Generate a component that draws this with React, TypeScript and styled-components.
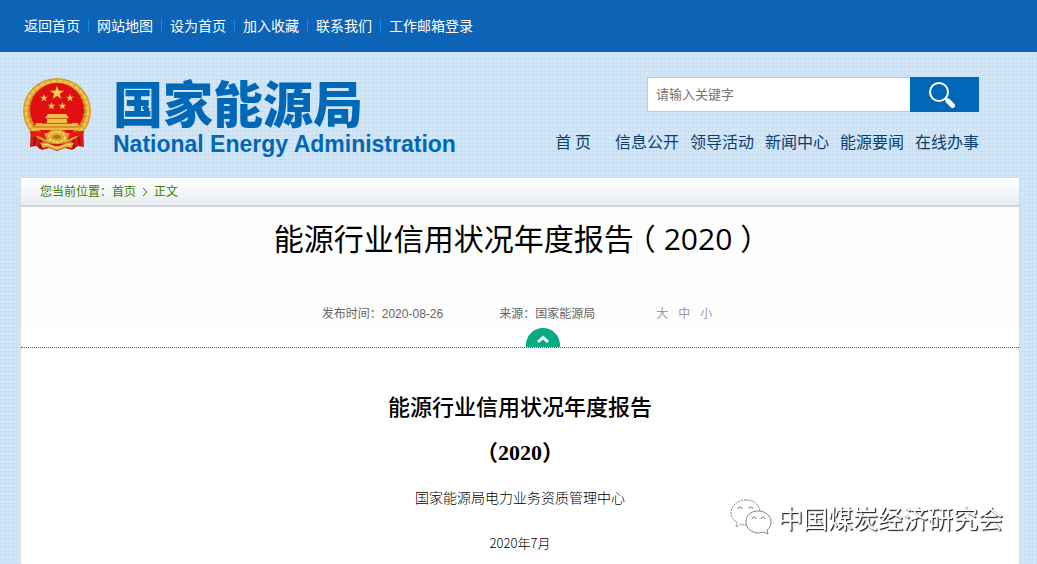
import React from "react";
import styled, { createGlobalStyle } from "styled-components";

const GlobalStyle = createGlobalStyle`
  * { box-sizing: border-box; }
  body {
    margin: 0;
    background-color: #d3e6f7;
    background-image:
      repeating-linear-gradient(0deg, rgba(176, 205, 232, 0.24) 0 1px, transparent 1px 4px),
      repeating-linear-gradient(90deg, rgba(176, 205, 232, 0.24) 0 1px, transparent 1px 4px);
    font-family: "Liberation Sans", "Noto Sans CJK SC", sans-serif;
    font-size: 12px;
  }
  a { color: inherit; text-decoration: none; }
  p, h1, h2 { margin: 0; }
`;

const Shell = styled.div`
  display: flex;
  flex-direction: column;
  min-height: 100vh;
`;

const TopBar = styled.nav`
  display: flex;
  align-items: center;
  height: 52px;
  padding: 0 16px;
  background: #0d63b6;
`;

const TopLink = styled.a`
  padding: 0 8px;
  border-left: 1px solid #0d8ce8;
  color: #fff;
  font-size: 14px;
  line-height: 14px;
  &:first-child { border-left: 0; }
`;

const Header = styled.header`
  display: flex;
  justify-content: space-between;
  align-items: flex-start;
  height: 125px;
  padding: 25px 58px 0 22px;
`;

const Brand = styled.a`
  display: flex;
  gap: 21px;
  color: #0068b7;
`;

const BrandText = styled.div`
  display: flex;
  flex-direction: column;
  gap: 6px;
  white-space: nowrap;
`;

const BrandName = styled.span`
  font-family: "Noto Sans CJK SC", sans-serif;
  font-size: 50px;
  line-height: 48px;
  font-weight: 900;
`;

const BrandLatin = styled.span`
  font-size: 23px;
  line-height: 26px;
  font-weight: 700;
`;

const Tools = styled.div`
  display: flex;
  flex-direction: column;
  align-items: flex-end;
  gap: 19px;
`;

const Search = styled.form`
  display: flex;
  width: 332px;
  height: 35px;
`;

const SearchInput = styled.input`
  flex: 1;
  min-width: 0;
  padding: 0 8px 2px;
  border: 1px solid #c8c8c8;
  border-right: 0;
  border-radius: 0;
  background: #fff;
  font-family: "Noto Sans CJK SC", sans-serif;
  font-size: 13px;
  &::placeholder { color: #757575; opacity: 1; }
`;

const SearchButton = styled.button`
  display: flex;
  justify-content: center;
  align-items: center;
  width: 69px;
  padding: 0 6px 0 0;
  border: 0;
  background: #0068b7;
`;

const MainNav = styled.nav`
  display: flex;
  gap: 11px;
  color: #0b3f70;
  font-family: "Noto Sans CJK SC", sans-serif;
  font-size: 16px;
  line-height: 20px;
  white-space: nowrap;
`;

const HomeLink = styled.a`
  margin-right: 13px;
`;

const Page = styled.main`
  flex: 1;
  margin: 0 17px 0 20px;
  border: 1px solid #d9d9d9;
  border-bottom: 0;
  background: #fff;
`;

const Crumbs = styled.nav`
  display: flex;
  align-items: center;
  gap: 6px;
  height: 29px;
  padding: 0 19px;
  border-bottom: 2px solid #d5d7d9;
  background: linear-gradient(#fff, #e9edf1);
  color: #3f7d00;
  line-height: 16px;
`;

const ArticleHead = styled.header`
  display: flex;
  flex-direction: column;
  align-items: center;
  padding-top: 10px;
  background: #fdfdfd;
`;

const Title = styled.h1`
  padding-left: 4px;
  color: #000;
  font-family: "Open Sans", "Noto Sans CJK SC", sans-serif;
  font-size: 30px;
  line-height: 44px;
  font-weight: 400;
`;

const TitleHan = styled.span`
  margin-right: -8px;
`;

const TitleYear = styled.span`
  padding: 0 8px;
`;

const Meta = styled.div`
  display: flex;
  margin-top: 43px;
  padding: 0 6px 1px 0;
  color: #666;
  line-height: 20px;
`;

const Source = styled.span`
  margin: 0 61px 0 56px;
`;

const SizeButton = styled.button`
  margin-right: 10px;
  padding: 0;
  border: 0;
  background: none;
  color: #999;
  font: inherit;
  &:last-child { margin-right: 0; }
`;

const Divider = styled.div`
  display: flex;
  justify-content: center;
  height: 23px;
  padding: 3px 0 0 46px;
  border-bottom: 1px dotted #0a7f62;
`;

const Collapse = styled.button`
  display: flex;
  justify-content: center;
  width: 34px;
  height: 19px;
  padding: 7px 0 0;
  border: 0;
  border-radius: 17px 17px 0 0;
  background: #04ac80;
`;

const Report = styled.section`
  padding-top: 37px;
  text-align: center;
  color: #000;
`;

const ReportTitle = styled.h2`
  font-family: "Liberation Serif", "Noto Sans CJK SC", serif;
  font-size: 22px;
  line-height: 45px;
  font-weight: 500;
`;

const ReportYear = styled.strong`
  font-weight: 700;
`;

const ReportLine = styled.p<{ $size: number }>`
  margin: 10px 0 20px;
  font-family: "Noto Sans CJK SC", sans-serif;
  font-size: ${(p) => p.$size}px;
  line-height: 25px;
  font-weight: 300;
  &:last-child { margin-bottom: 8px; }
`;

const Watermark = styled.div`
  position: fixed;
  right: 34px;
  bottom: 27px;
  display: flex;
  align-items: center;
  gap: 6px;
  color: #fff;
  font-family: "Noto Sans CJK SC", sans-serif;
  font-size: 25px;
  line-height: 40px;
  text-shadow: 1px 1px 1px #222, 1px 1px 1px #777;
`;

const star = (cx: number, cy: number, r: number) =>
  Array.from({ length: 10 }, (_, i) => {
    const a = (Math.PI / 5) * i - Math.PI / 2;
    const d = i % 2 ? r * 0.4 : r;
    return `${(cx + d * Math.cos(a)).toFixed(2)},${(cy + d * Math.sin(a)).toFixed(2)}`;
  }).join(" ");

const Emblem = () => (
  <svg width="70" height="76" viewBox="0 0 70 76" aria-hidden="true">
    <path d="M9 50 L8 70 L14 69 L20 73 L27 71 L35 74 L43 71 L50 73 L56 69 L62 70 L61 50Z" fill="#d81916" />
    <path d="M14 56 L12 69 M19 60 L18 72 M51 60 L52 72 M56 56 L58 69" stroke="#8f0e0c" strokeWidth="1.5" />
    <ellipse cx="35" cy="34" rx="34" ry="33" fill="#d79a24" />
    <ellipse cx="35" cy="34" rx="31" ry="30" fill="none" stroke="#efc350" strokeWidth="3" strokeDasharray="5 1" />
    <ellipse cx="35" cy="34" rx="28" ry="27" fill="none" stroke="#a96d12" strokeWidth="1" strokeDasharray="2 3" />
    <ellipse cx="35" cy="33" rx="27" ry="27" fill="#e00d13" />
    <g fill="#f8cf52" stroke="#a64a0b" strokeWidth=".3">
      <polygon points={star(35, 16, 7.5)} />
      <polygon points={star(22, 21, 4.2)} />
      <polygon points={star(48, 21, 4.2)} />
      <polygon points={star(29.5, 29, 4.2)} />
      <polygon points={star(40.5, 29, 4.2)} />
    </g>
    <path d="M26 37H44L47 41H23Z M25 42H45V46H25Z M14 46H56L58 53H12Z" fill="#f0bd40" />
    <path d="M24 41.5H46 M20 46.5H50 M13 50H57" stroke="#b46a12" strokeWidth="1" />
    <path d="M8 54C18 54 22 55 27 58L24 63C18 59 13 58 9 59Z M62 54C52 54 48 55 43 58L46 63C52 59 57 58 61 59Z" fill="#e21b18" />
    <path d="M22 56C27 57 28 52 35 52S43 57 48 56L45 63C41 62 40 67 35 67S29 62 25 63Z" fill="#dda530" />
    <ellipse cx="35" cy="60" rx="8" ry="5" fill="none" stroke="#f7d566" strokeWidth="2" strokeDasharray="3 1" />
    <ellipse cx="35" cy="60" rx="4" ry="2" fill="#b8731a" />
    <path d="M18 66C25 63 29 69 35 69S45 63 52 66L49 71C43 68 40 73 35 73S27 68 21 71Z" fill="#e4ae35" />
    <path d="M21 68C27 66 30 71 35 71S43 66 49 68" fill="none" stroke="#ffe07a" strokeWidth="1" />
  </svg>
);

const Magnifier = () => (
  <svg width="28" height="28" viewBox="0 0 28 28" fill="none" stroke="#fff" aria-hidden="true">
    <circle cx="11" cy="11" r="9" strokeWidth="2" />
    <path d="M17.500 17.500L20 20" strokeWidth="2" />
    <path d="M20 20L24.500 24.500" strokeWidth="5" strokeLinecap="round" />
  </svg>
);

const Chat = () => (
  <svg width="42" height="36" viewBox="0 0 42 36" fill="#fff" stroke="#666" strokeWidth=".8" aria-hidden="true">
    <path d="M16 1C7 1 1 7 1 14C1 18 3 21 7 23L6 28L11 25C13 26 15 26 17 26C25 26 30 20 30 13C30 6 24 1 16 1Z" strokeDasharray="2 1" />
    <path d="M28 12C20 12 16 17 16 23C16 29 21 34 29 34C31 34 32 33 34 33L38 35L37 31C40 29 41 26 41 23C41 17 36 12 28 12Z" />
    <g fill="none">
      <path d="M8 10a2 2 0 0 1 4 0M19 10a2 2 0 0 1 4 0M22 20a2 2 0 0 1 4 0M31 20a2 2 0 0 1 4 0" />
    </g>
  </svg>
);

const topLinks = ["返回首页", "网站地图", "设为首页", "加入收藏", "联系我们", "工作邮箱登录"];
const sections = ["信息公开", "领导活动", "新闻中心", "能源要闻", "在线办事"];

export default function App() {
  return (
    <Shell>
      <GlobalStyle />
      <TopBar>
        {topLinks.map((t) => (
          <TopLink href="#" key={t}>{t}</TopLink>
        ))}
      </TopBar>
      <Header>
        <Brand href="#">
          <Emblem />
          <BrandText>
            <BrandName>国家能源局</BrandName>
            <BrandLatin>National Energy Administration</BrandLatin>
          </BrandText>
        </Brand>
        <Tools>
          <Search>
            <SearchInput type="text" aria-label="请输入关键字" placeholder="请输入关键字" />
            <SearchButton type="button" aria-label="搜索"><Magnifier /></SearchButton>
          </Search>
          <MainNav>
            <HomeLink href="#">首 页</HomeLink>
            {sections.map((t) => (
              <a href="#" key={t}>{t}</a>
            ))}
          </MainNav>
        </Tools>
      </Header>
      <Page>
        <Crumbs>
          <span>您当前位置：<a href="#">首页</a></span>
          <svg width="6" height="10" viewBox="0 0 6 10" fill="none" stroke="#3f7d00" aria-hidden="true">
            <path d="M1 1L5 5L1 9" />
          </svg>
          <span>正文</span>
        </Crumbs>
        <article>
          <ArticleHead>
            <Title>
              <TitleHan>能源行业信用状况年度报告</TitleHan>（<TitleYear>2020</TitleYear>）
            </Title>
            <Meta>
              <span>发布时间：2020-08-26</span>
              <Source>来源：国家能源局</Source>
              <SizeButton type="button">大</SizeButton>
              <SizeButton type="button">中</SizeButton>
              <SizeButton type="button">小</SizeButton>
            </Meta>
          </ArticleHead>
          <Divider>
            <Collapse type="button" aria-label="收起">
              <svg width="14" height="9" viewBox="0 0 14 9" fill="none" stroke="#fff" strokeWidth="3" aria-hidden="true">
                <path d="M2 7L7 2.500L12 7" />
              </svg>
            </Collapse>
          </Divider>
          <Report>
            <ReportTitle>
              能源行业信用状况年度报告
              <br />
              <ReportYear>（2020）</ReportYear>
            </ReportTitle>
            <ReportLine $size={14}>国家能源局电力业务资质管理中心</ReportLine>
            <ReportLine $size={13}>2020年7月</ReportLine>
          </Report>
        </article>
      </Page>
      <Watermark>
        <Chat />
        <span>中国煤炭经济研究会</span>
      </Watermark>
    </Shell>
  );
}
